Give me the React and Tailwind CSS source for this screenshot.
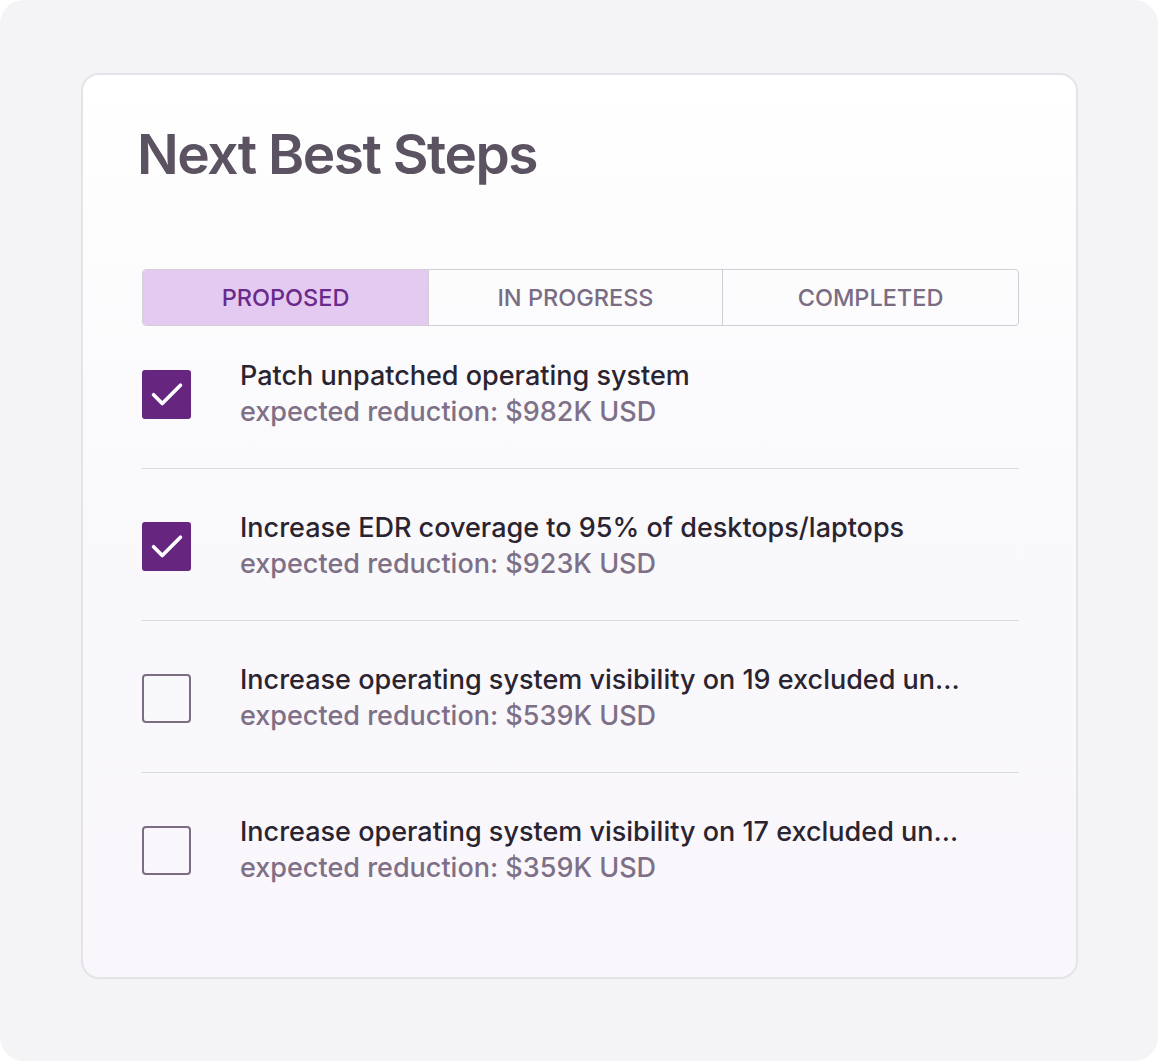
import React, { useState } from 'react';

const steps = [
    { title: 'Patch unpatched operating system', amount: '$982K USD', done: true },
    { title: 'Increase EDR coverage to 95% of desktops/laptops', amount: '$923K USD', done: true },
    { title: 'Increase operating system visibility on 19 excluded un...', amount: '$539K USD', done: false },
    { title: 'Increase operating system visibility on 17 excluded un...', amount: '$359K USD', done: false },
];

const tabs = ['PROPOSED', 'IN PROGRESS', 'COMPLETED'];

const CheckBox = ({ checked, onClick }) => {
    if (checked) {
        return (
            <button onClick={onClick} className="w-[49px] h-[49px] shrink-0 rounded-[3px] bg-[#66267f] flex items-center justify-center">
                <svg width="38" height="38" viewBox="0 0 24 24" fill="none" stroke="white" strokeWidth="2.3" strokeLinecap="round" strokeLinejoin="round">
                    <path d="M3.5 12.5l5.5 5.5L20.5 6.5" />
                </svg>
            </button>
        );
    }
    return <button onClick={onClick} className="w-[49px] h-[49px] shrink-0 rounded-[4px] border-2 border-[#7b6d82] bg-transparent"></button>;
};

const App = () => {
    const [activeTab, setActiveTab] = useState(0);
    const [items, setItems] = useState(steps);

    const toggle = (index) => {
        setItems(items.map((item, i) => (i === index ? { ...item, done: !item.done } : item)));
    };

    return (
        <div className="w-[1158px] h-[1061px] bg-white" style={{ fontFamily: 'Inter, "Noto Sans", sans-serif' }}>
            <div className="w-full h-full bg-[#f4f4f6] rounded-[24px] pt-[73px] pl-[81px]">
                <div className="w-[997px] h-[906px] rounded-[18px] border-2 border-[#e4e3e8] bg-gradient-to-b from-white via-[#f9f8fb] to-[#f9f7fb] px-[58px] pt-[45px]">
                    <h1 className="text-[55px] font-semibold text-[#5b5361] tracking-[-1.5px] leading-[68px] -ml-[4px]">Next Best Steps</h1>

                    <div className="mt-[81px] flex h-[57px] rounded-[4px] border border-[#d3cdd8] overflow-hidden ml-[1px] -mr-[1px]">
                        {tabs.map((tab, index) => (
                            <button
                                key={tab}
                                onClick={() => setActiveTab(index)}
                                className={`h-full flex items-center justify-center text-[23.5px] font-medium ${index === 0 ? 'w-[285px]' : index === 1 ? 'w-[294px] border-l border-[#d3cdd8]' : 'flex-1 border-l border-[#d3cdd8]'} ${activeTab === index ? 'bg-[#e4c9f0] text-[#6a2a8b]' : 'bg-transparent text-[#7a6c82]'}`}
                            >
                                {tab}
                            </button>
                        ))}
                    </div>

                    <div className="ml-[1px] -mr-[1px]">
                        {items.map((item, index) => (
                            <div
                                key={index}
                                className={`flex items-center gap-[49px] ${index === 0 ? 'pt-8' : 'pt-[41px]'} pb-[38px] ${index < items.length - 1 ? 'border-b border-[#dcd8e0]' : ''}`}
                            >
                                <CheckBox checked={item.done} onClick={() => toggle(index)} />
                                <div className="leading-9 text-[27px] font-medium">
                                    <p className="text-[#2a2430] whitespace-nowrap">{item.title}</p>
                                    <p className="text-[#7e7086]">expected reduction: {item.amount}</p>
                                </div>
                            </div>
                        ))}
                    </div>
                </div>
            </div>
        </div>
    );
};

export default App;
